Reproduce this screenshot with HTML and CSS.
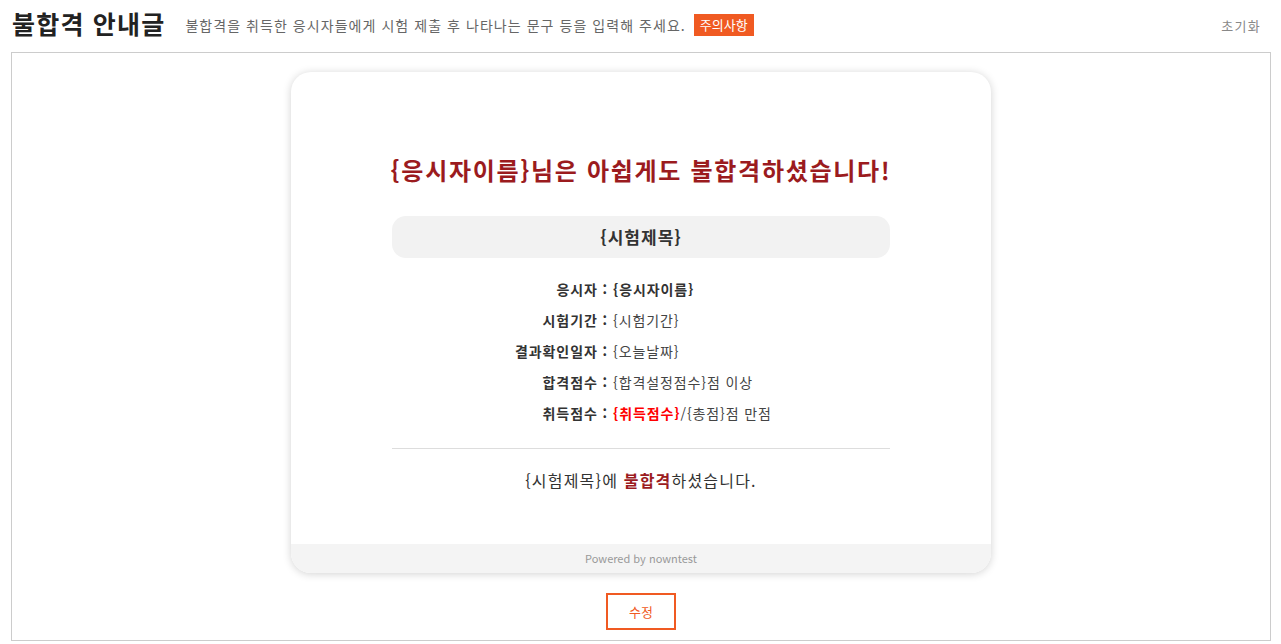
FILE: index.html
```html
<!DOCTYPE html>
<html lang="ko">
<head>
<meta charset="utf-8">
<link rel="stylesheet" href="styles.css">
</head>
<body>
<header class="top">
  <h1 class="title">불합격 안내글</h1>
  <p class="desc">불합격을 취득한 응시자들에게 시험 제출 후 나타나는 문구 등을 입력해 주세요.</p>
  <span class="badge">주의사항</span>
  <span class="reset">초기화</span>
</header>
<main class="frame">
  <section class="card">
    <div class="card-body">
      <h2 class="headline">{응시자이름}님은 아쉽게도 불합격하셨습니다!</h2>
      <div class="exam-title">{시험제목}</div>
      <dl class="info">
        <div class="row"><dt>응시자 :</dt><dd class="strong">{응시자이름}</dd></div>
        <div class="row"><dt>시험기간 :</dt><dd>{시험기간}</dd></div>
        <div class="row"><dt>결과확인일자 :</dt><dd>{오늘날짜}</dd></div>
        <div class="row"><dt>합격점수 :</dt><dd>{합격설정점수}점 이상</dd></div>
        <div class="row"><dt>취득점수 :</dt><dd><span class="red">{취득점수}</span>/{총점}점 만점</dd></div>
      </dl>
      <hr class="sep">
      <p class="msg">{시험제목}에 <strong class="fail">불합격</strong>하셨습니다.</p>
    </div>
    <footer class="powered">Powered by nowntest</footer>
  </section>
  <button class="edit">수정</button>
</main>
</body>
</html>
```
FILE: styles.css
```css
* { box-sizing: border-box; }
html, body { margin: 0; padding: 0; background: #fff; }
body {
  font-family: "Noto Sans CJK KR", "Noto Sans", sans-serif;
  color: #333;
  width: 1281px;
  height: 644px;
  overflow: hidden;
}
.top {
  display: flex;
  align-items: center;
  height: 52px;
  padding: 0 20px 0 12px;
}
.title {
  margin: 0;
  font-size: 25px;
  font-weight: 700;
  color: #222;
  letter-spacing: 1.2px;
  line-height: 1;
  padding-bottom: 6px;
}
.desc {
  margin: 0 0 0 20px;
  font-size: 14px;
  color: #666;
  letter-spacing: 1.05px;
  padding-bottom: 2px;
}
.badge {
  margin-left: 8px;
  background: #f05a22;
  color: #fff;
  font-size: 13px;
  height: 22px;
  line-height: 22px;
  padding: 0 6px;
  margin-bottom: 2px;
}
.reset {
  margin-left: auto;
  font-size: 13px;
  color: #888;
  letter-spacing: 1.3px;
  padding-bottom: 2px;
}
.frame {
  margin: 0 10px 0 11px;
  height: 589px;
  border: 1px solid #ccc;
  display: flex;
  flex-direction: column;
  align-items: center;
  padding-top: 19px;
}
.card {
  width: 700px;
  border-radius: 20px;
  box-shadow: 0 1px 8px rgba(0,0,0,0.18);
  overflow: hidden;
  background: #fff;
}
.card-body {
  padding: 82px 101px 53px;
  display: flex;
  flex-direction: column;
  align-items: stretch;
}
.headline {
  margin: 0 -30px;
  white-space: nowrap;
  text-align: center;
  font-size: 24px;
  font-weight: 700;
  color: #9b1b1e;
  line-height: 32px;
  letter-spacing: 1.7px;
}
.exam-title {
  margin-top: 30px;
  background: #f2f2f2;
  border-radius: 14px;
  height: 42px;
  line-height: 42px;
  text-align: center;
  font-size: 17px;
  font-weight: 700;
  color: #333;
  letter-spacing: 1px;
}
.info {
  margin: 15px 0 0;
  display: flex;
  flex-direction: column;
}
.row {
  display: grid;
  grid-template-columns: 216px 1fr;
  column-gap: 5px;
  height: 31px;
  align-items: center;
  font-size: 14px;
  letter-spacing: 0.9px;
}
.row dt {
  text-align: right;
  font-weight: 700;
  color: #333;
}
.row dd {
  margin: 0;
  color: #444;
}
.row dd.strong { font-weight: 700; color: #333; }
.red { color: #f00; font-weight: 700; }
.sep {
  margin: 20px 0 0;
  border: 0;
  border-top: 1px solid #ddd;
}
.msg {
  margin: 20px 0 0;
  text-align: center;
  font-size: 16px;
  color: #333;
  line-height: 22px;
  letter-spacing: 1.2px;
}
.fail { color: #9b1b1e; font-weight: 700; }
.powered {
  background: #f4f4f4;
  height: 29px;
  line-height: 29px;
  text-align: center;
  font-size: 11px;
  color: #999;
}
.edit {
  margin-top: 20px;
  width: 70px;
  height: 37px;
  border: 2px solid #f05a22;
  background: #fff;
  color: #f05a22;
  font-family: inherit;
  font-size: 13px;
  cursor: pointer;
}
```
